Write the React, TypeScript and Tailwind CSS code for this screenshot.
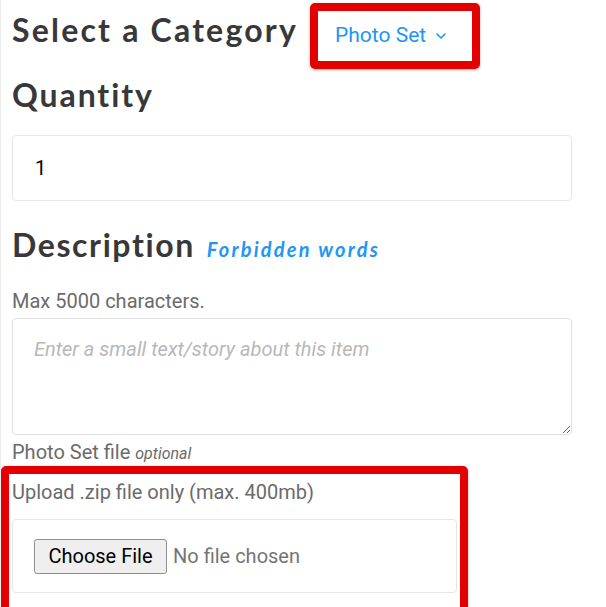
export default function App() {
  return (
    <div className="relative h-screen overflow-hidden bg-white border-l border-[#ececec] pl-[11px] pr-3 font-['Roboto',sans-serif] text-[20px] leading-[30px] text-[#6b6b6b]">
      {/* Category row */}
      <div className="flex items-baseline pt-[11px]">
        <h1 className="font-['Lato',sans-serif] font-bold text-[32px] leading-[38px] tracking-[2.2px] text-[#383838]">
          Select a Category
        </h1>
        <button className="ml-[37px] flex items-center gap-[10px] text-[21px] text-[#2196f3]">
          <span>Photo Set</span>
          <svg width="10" height="6" viewBox="0 0 10 6" className="mt-[2px]">
            <polyline points="1,1 5,5 9,1" fill="none" stroke="#2196f3" strokeWidth="1.6" strokeLinecap="round" strokeLinejoin="round" />
          </svg>
        </button>
      </div>

      {/* Quantity */}
      <h2 className="mt-[26px] font-['Lato',sans-serif] font-bold text-[32px] leading-[38px] tracking-[1.9px] text-[#383838]">
        Quantity
      </h2>
      <div className="mt-[21px] flex h-[66px] w-[560px] items-center rounded-[4px] border border-[#e6e6e6] pl-[22px] text-black">
        1
      </div>

      {/* Description */}
      <div className="mt-[25px] flex items-baseline">
        <h2 className="font-['Lato',sans-serif] font-bold text-[32px] leading-[38px] tracking-[1.6px] text-[#383838]">
          Description
        </h2>
        <a className="ml-[12px] font-['Lato',sans-serif] font-bold italic text-[20px] tracking-[2.2px] text-[#2196f3]">
          Forbidden words
        </a>
      </div>
      <p className="mt-[22px]">Max 5000 characters.</p>
      <textarea
        className="mt-[2px] block h-[117px] w-[560px] rounded-[4px] border border-[#e0e0e0] px-[21px] pt-[15px] leading-[30px] outline-none placeholder:italic placeholder:text-[#b8b8b8]"
        placeholder="Enter a small text/story about this item"
      />
      <p className="mt-[2px]">
        Photo Set file <span className="italic text-[16px]">optional</span>
      </p>

      {/* Upload */}
      <p className="mt-[8px]">Upload .zip file only (max. 400mb)</p>
      <div className="mt-[12px] flex h-[74px] w-[445px] items-center rounded-[4px] border border-[#e6e6e6] pl-[21px]">
        <span className="flex h-[35px] w-[133px] items-center justify-center rounded-[3px] border border-[#8f8f8f] bg-[#efefef] text-black">
          Choose File
        </span>
        <span className="ml-[6px] text-[#757575]">No file chosen</span>
      </div>

      {/* Annotation overlays */}
      <div className="pointer-events-none absolute left-[309px] top-[3px] h-[66px] w-[170px] rounded-[5px] border-8 border-[#e50000] shadow-[0_1px_3px_rgba(0,0,0,0.3)]" />
      <div className="pointer-events-none absolute left-0 top-[466px] h-[160px] w-[467px] rounded-[5px] border-8 border-[#e50000] shadow-[0_1px_3px_rgba(0,0,0,0.3)]" />
    </div>
  );
}
